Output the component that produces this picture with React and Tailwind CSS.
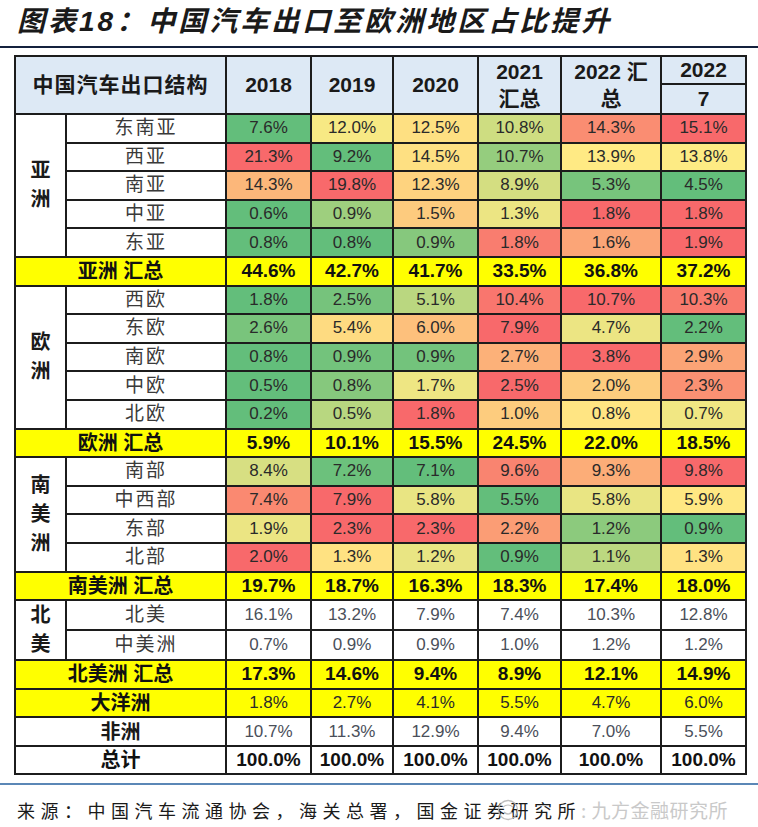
import React from "react";

const GREEN = [99, 190, 123];
const YELLOW = [255, 235, 132];
const RED = [248, 105, 107];

const mix = (a, b, t) =>
  `rgb(${a.map((c, i) => Math.round(c + (b[i] - c) * t)).join(",")})`;

// Excel style 3-colour scale per row: min green, median yellow, max red
const heat = (v, vals) => {
  const s = [...vals].sort((x, y) => x - y);
  const min = s[0];
  const max = s[s.length - 1];
  const n = s.length;
  const mid = n % 2 ? s[(n - 1) / 2] : (s[n / 2 - 1] + s[n / 2]) / 2;
  if (v <= mid) {
    const t = mid === min ? 1 : (v - min) / (mid - min);
    return mix(GREEN, YELLOW, t);
  }
  const t = max === mid ? 0 : (v - mid) / (max - mid);
  return mix(YELLOW, RED, t);
};

const groups = [
  {
    name: ["亚", "洲"],
    heat: true,
    rows: [
      ["东南亚", [7.6, 12.0, 12.5, 10.8, 14.3, 15.1]],
      ["西亚", [21.3, 9.2, 14.5, 10.7, 13.9, 13.8]],
      ["南亚", [14.3, 19.8, 12.3, 8.9, 5.3, 4.5]],
      ["中亚", [0.6, 0.9, 1.5, 1.3, 1.8, 1.8]],
      ["东亚", [0.8, 0.8, 0.9, 1.8, 1.6, 1.9]],
    ],
    total: ["亚洲 汇总", [44.6, 42.7, 41.7, 33.5, 36.8, 37.2]],
  },
  {
    name: ["欧", "洲"],
    heat: true,
    rows: [
      ["西欧", [1.8, 2.5, 5.1, 10.4, 10.7, 10.3]],
      ["东欧", [2.6, 5.4, 6.0, 7.9, 4.7, 2.2]],
      ["南欧", [0.8, 0.9, 0.9, 2.7, 3.8, 2.9]],
      ["中欧", [0.5, 0.8, 1.7, 2.5, 2.0, 2.3]],
      ["北欧", [0.2, 0.5, 1.8, 1.0, 0.8, 0.7]],
    ],
    total: ["欧洲 汇总", [5.9, 10.1, 15.5, 24.5, 22.0, 18.5]],
  },
  {
    name: ["南", "美", "洲"],
    heat: true,
    rows: [
      ["南部", [8.4, 7.2, 7.1, 9.6, 9.3, 9.8]],
      ["中西部", [7.4, 7.9, 5.8, 5.5, 5.8, 5.9]],
      ["东部", [1.9, 2.3, 2.3, 2.2, 1.2, 0.9]],
      ["北部", [2.0, 1.3, 1.2, 0.9, 1.1, 1.3]],
    ],
    total: ["南美洲 汇总", [19.7, 18.7, 16.3, 18.3, 17.4, 18.0]],
  },
  {
    name: ["北", "美"],
    heat: false,
    rows: [
      ["北美", [16.1, 13.2, 7.9, 7.4, 10.3, 12.8]],
      ["中美洲", [0.7, 0.9, 0.9, 1.0, 1.2, 1.2]],
    ],
    total: ["北美洲 汇总", [17.3, 14.6, 9.4, 8.9, 12.1, 14.9]],
  },
];

const pct = (v) => `${v.toFixed(1)}%`;
const cell = "border-2 border-[#1c1c1c] p-0 text-center leading-[22px]";
const rowH = "h-[28.6px]";

const App = () => {
  return (
    <div
      className="w-[758px] h-[827px] bg-white relative overflow-hidden text-[#222]"
      style={{ fontFamily: "'Liberation Sans', 'Noto Sans CJK SC', sans-serif" }}
    >
      {/* TITLE */}
      <div className="h-[46px] pl-[17px] pt-[3px]">
        <h1 className="text-[28px] leading-[38px] font-bold italic tracking-[3px] text-[#1a1a1a]">
          图表18：中国汽车出口至欧洲地区占比提升
        </h1>
      </div>
      <div className="h-[2px] bg-[#14213d]"></div>

      {/* TABLE */}
      <div className="pt-[7px] pl-[14px]">
        <table className="border-collapse table-fixed w-[731px]">
          <colgroup>
            <col className="w-[51px]" />
            <col className="w-[160px]" />
            <col className="w-[85px]" />
            <col className="w-[82px]" />
            <col className="w-[85px]" />
            <col className="w-[83px]" />
            <col className="w-[100px]" />
            <col className="w-[85px]" />
          </colgroup>
          <thead className="bg-[#dde9f5] font-bold text-[21px] text-[#1a1a1a]">
            <tr className="h-[28px]">
              <th colSpan={2} rowSpan={2} className={`${cell} tracking-[1px]`}>
                中国汽车出口结构
              </th>
              <th rowSpan={2} className={cell}>2018</th>
              <th rowSpan={2} className={cell}>2019</th>
              <th rowSpan={2} className={cell}>2020</th>
              <th rowSpan={2} className={`${cell} leading-[27px]`}>
                2021
                <br />
                汇总
              </th>
              <th rowSpan={2} className={`${cell} leading-[27px]`}>
                2022 汇
                <br />
                总
              </th>
              <th className={cell}>2022</th>
            </tr>
            <tr className="h-[30px]">
              <th className={cell}>7</th>
            </tr>
          </thead>
          <tbody className="text-[17px]">
            {groups.map((g) => (
              <React.Fragment key={g.total[0]}>
                {g.rows.map(([label, vals], ri) => (
                  <tr key={label} className={rowH}>
                    {ri === 0 && (
                      <td
                        rowSpan={g.rows.length}
                        className={`${cell} bg-white font-bold text-[20px] text-[#1a1a1a]`}
                      >
                        {g.name.map((c) => (
                          <div key={c} className="leading-[29px]">
                            {c}
                          </div>
                        ))}
                      </td>
                    )}
                    <td className={`${cell} bg-white text-[19px] tracking-[2px] text-[#3a3a3a]`}>
                      {label}
                    </td>
                    {vals.map((v, i) => (
                      <td
                        key={i}
                        className={`${cell} ${g.heat ? "text-[#2a2a2a]" : "bg-white text-[#4a4f5a]"}`}
                        style={g.heat ? { backgroundColor: heat(v, vals) } : undefined}
                      >
                        {pct(v)}
                      </td>
                    ))}
                  </tr>
                ))}
                <tr className={`${rowH} bg-[#ffff00] text-[#111]`}>
                  <td colSpan={2} className={`${cell} font-bold text-[20px]`}>
                    {g.total[0]}
                  </td>
                  {g.total[1].map((v, i) => (
                    <td key={i} className={`${cell} font-bold text-[19px]`}>
                      {pct(v)}
                    </td>
                  ))}
                </tr>
              </React.Fragment>
            ))}
            <tr className={`${rowH} bg-[#ffff00] text-[#2a2a2a]`}>
              <td colSpan={2} className={`${cell} font-bold text-[20px] text-[#111]`}>
                大洋洲
              </td>
              {[1.8, 2.7, 4.1, 5.5, 4.7, 6.0].map((v, i) => (
                <td key={i} className={cell}>
                  {pct(v)}
                </td>
              ))}
            </tr>
            <tr className={`${rowH} bg-white`}>
              <td colSpan={2} className={`${cell} font-bold text-[20px] text-[#1a1a1a]`}>
                非洲
              </td>
              {[10.7, 11.3, 12.9, 9.4, 7.0, 5.5].map((v, i) => (
                <td key={i} className={`${cell} text-[#4a4f5a]`}>
                  {pct(v)}
                </td>
              ))}
            </tr>
            <tr className={`${rowH} bg-white text-[#111]`}>
              <td colSpan={2} className={`${cell} font-bold text-[20px]`}>
                总计
              </td>
              {[0, 1, 2, 3, 4, 5].map((i) => (
                <td key={i} className={`${cell} font-bold text-[19px]`}>
                  100.0%
                </td>
              ))}
            </tr>
          </tbody>
        </table>
      </div>

      {/* SOURCE */}
      <div className="mt-[8px] h-[2px] bg-[#5b87b6]"></div>
      <div className="relative pl-[17px] pt-[12px]">
        <p
          className="text-[18px] leading-[26px] tracking-[5.5px] text-[#1a1a1a]"
          style={{ fontFamily: "'Noto Sans CJK SC', sans-serif" }}
        >
          来源：中国汽车流通协会，海关总署，国金证券研究所
        </p>
        {/* watermark */}
        <div className="absolute left-[497px] top-[12px] flex items-center text-[#c4c4c4] opacity-90">
          <svg width="22" height="24" viewBox="0 0 22 24" fill="none">
            <circle cx="11" cy="12" r="9.5" stroke="#b8b8b8" strokeWidth="1.3" />
            <path d="M6 9 Q11 5 16 9 M7 14 Q11 18 15 14" stroke="#b8b8b8" strokeWidth="1.2" />
          </svg>
          <span
            className="text-[19px] leading-[26px] ml-[62px] tracking-[0.5px]"
            style={{ fontFamily: "'Noto Sans CJK SC', sans-serif" }}
          >
            : 九方金融研究所
          </span>
        </div>
      </div>
    </div>
  );
};

export default App;
